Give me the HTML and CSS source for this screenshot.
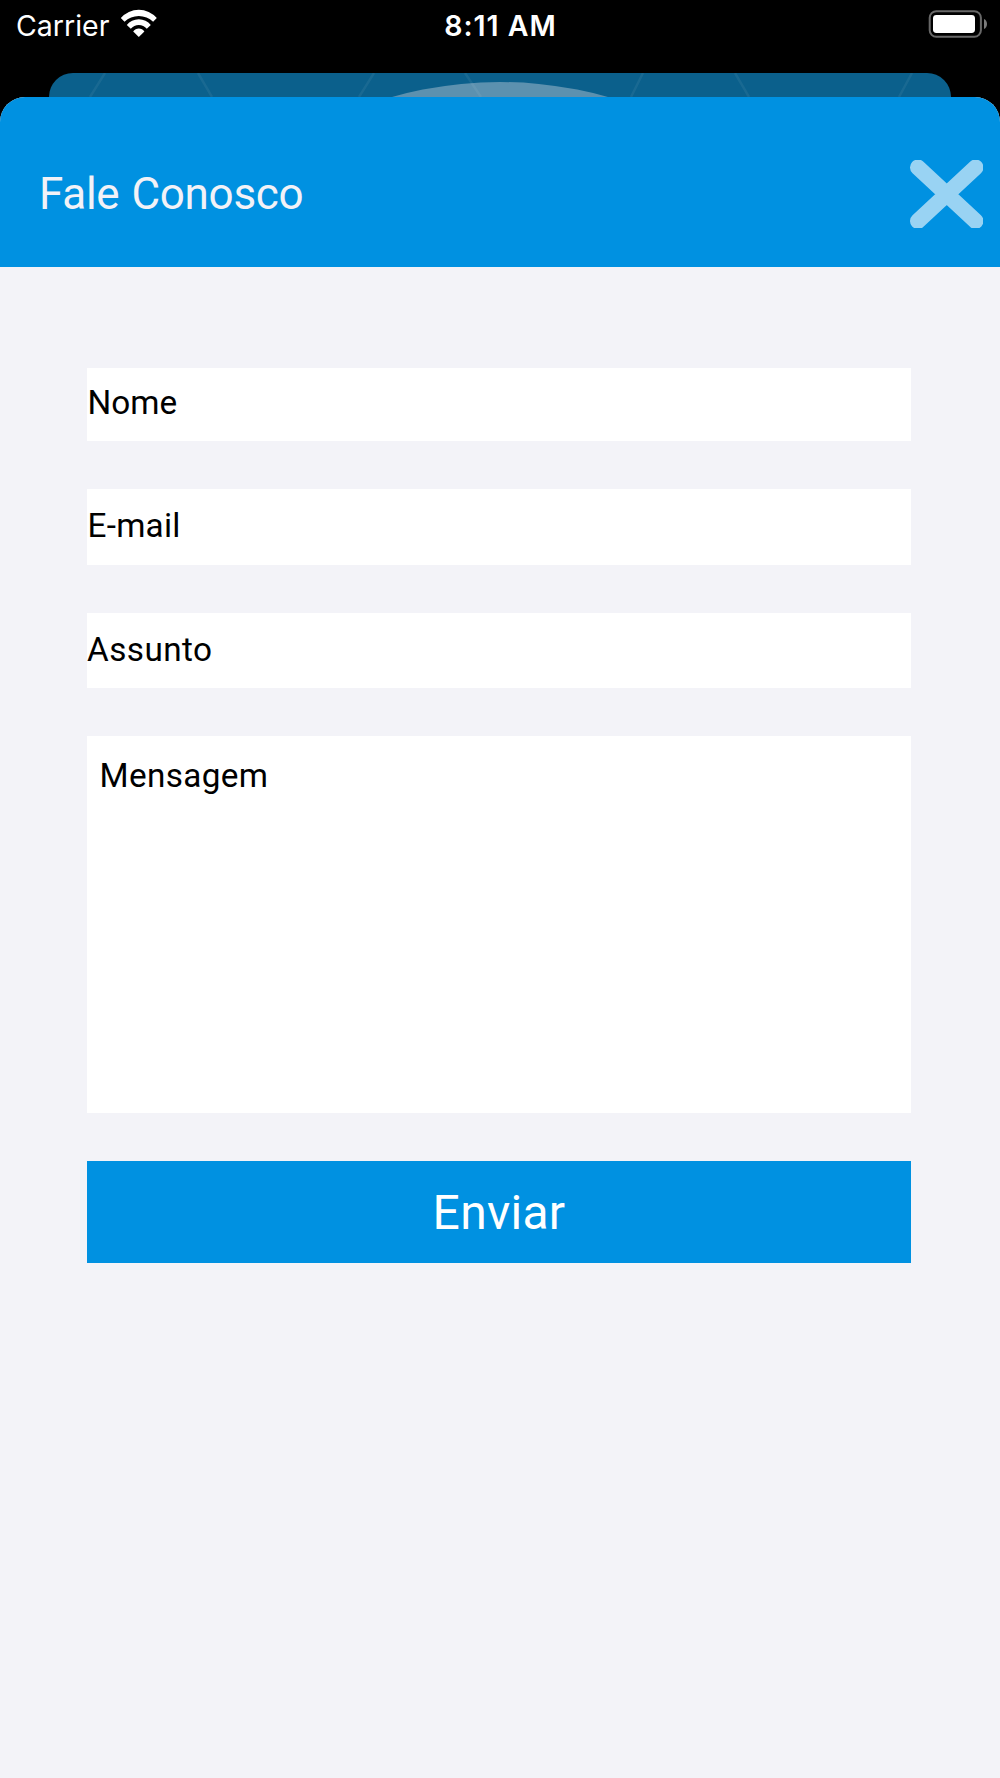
FILE: index.html
```html
<!DOCTYPE html>
<html lang="pt-BR">
<head>
<meta charset="utf-8">
<title>Fale Conosco</title>
<link rel="stylesheet" href="styles.css">
</head>
<body>
<div class="status-bar">
  <div class="status-left">
    <span class="carrier">Carrier</span>
    <svg class="wifi" width="38" height="28" viewBox="0 0 38 28">
      <path d="M0.8 9.1 A23.8 23.8 0 0 1 36.8 9.1 L33.1 12.8 A20.5 20.5 0 0 0 4.5 12.8 Z"/>
      <path d="M6.8 16 A15.2 15.2 0 0 1 30.8 16 L26.8 19.8 A10.5 10.5 0 0 0 10.8 19.8 Z"/>
      <path d="M13.2 22.4 A6.7 6.7 0 0 1 24.4 22.4 L18.8 28 Z"/>
    </svg>
  </div>
  <span class="time">8:11 AM</span>
  <svg class="battery" width="59" height="28" viewBox="0 0 59 28">
    <rect class="battery-shell" x="1.7" y="1.2" width="51.2" height="25.6" rx="6.6"/>
    <rect class="battery-level" x="5" y="5" width="42" height="18" rx="3.4"/>
    <path class="battery-cap" d="M56 9 C60 10.5 60 17.5 56 19 Z"/>
  </svg>
</div>

<svg class="back-sheet" width="902" height="24" viewBox="49 73 902 24">
  <circle class="back-disc" cx="500" cy="478" r="396"/>
  <path class="back-lines" d="M105 73L90 97M198 73L212 97M374 73L359 97M465 73L481 97M643 73L631 97M735 73L749 97M912 73L899 97"/>
</svg>

<main class="sheet">
  <header class="sheet-header">
    <h1 class="title">Fale Conosco</h1>
    <svg class="close" width="73" height="68" viewBox="0 0 73 68">
      <path d="M8 7.5L65.5 61M65.5 7.5L8 61"/>
    </svg>
  </header>
  <form class="form">
    <div class="field field-name">Nome</div>
    <div class="field field-email">E-mail</div>
    <div class="field field-subject">Assunto</div>
    <div class="field field-message">Mensagem</div>
    <button class="submit" type="button">Enviar</button>
  </form>
</main>
</body>
</html>
```

FILE: styles.css
```css
* {
  box-sizing: border-box;
}

body {
  margin: 0;
  width: 1000px;
  height: 1778px;
  overflow: hidden;
  display: flex;
  flex-direction: column;
  background: #000;
  font-family: Roboto, "Liberation Sans", sans-serif;
}

.status-bar {
  display: grid;
  grid-template-columns: 1fr auto 1fr;
  align-items: start;
  height: 73px;
  padding: 0 13px 0 16px;
  color: #fff;
  font: 400 28.5px/51px Inter, "Liberation Sans", sans-serif;
}

.status-left {
  display: flex;
  gap: 10px;
}

.carrier {
  width: 94px;
  white-space: nowrap;
}

.wifi {
  margin-top: 9px;
  fill: #fff;
}

.time {
  margin-left: -2px;
  font-weight: 600;
  letter-spacing: 1px;
}

.battery {
  justify-self: end;
  margin-top: 10px;
}

.battery-shell {
  fill: none;
  stroke: #686868;
  stroke-width: 2;
}

.battery-level {
  fill: #fff;
}

.battery-cap {
  fill: #7b7b7b;
}

.back-sheet {
  flex: none;
  align-self: center;
  border-radius: 24px 24px 0 0;
  background: #0b608c;
}

.back-disc {
  fill: #5c91af;
}

.back-lines {
  stroke: #fff;
  stroke-opacity: 0.06;
  stroke-width: 2.5;
}

.sheet {
  flex: 1;
  border-radius: 25px 25px 0 0;
  background: #f3f3f8;
  overflow: hidden;
}

.sheet-header {
  display: flex;
  align-items: center;
  justify-content: space-between;
  height: 170px;
  padding: 24px 17px 0 39px;
  background: #0091e1;
}

.title {
  margin: 0;
  color: #f2f2f7;
  font-size: 44px;
  font-weight: 400;
  line-height: 52px;
  letter-spacing: -0.3px;
  word-spacing: 1.5px;
}

.close {
  overflow: hidden;
}

.close path {
  stroke: #99d3f3;
  stroke-width: 16;
  stroke-linecap: round;
}

.form {
  display: flex;
  flex-direction: column;
  gap: 48px;
  padding: 101px 89px 0 87px;
}

.field {
  display: flex;
  align-items: center;
  background: #fff;
  color: #000;
  font-size: 33.3px;
  line-height: 40px;
  letter-spacing: 0.35px;
}

.field-name {
  height: 73px;
  padding: 0 0 4px 0.5px;
  letter-spacing: 0;
}

.field-email {
  height: 76px;
  padding: 0 0 3px 0.5px;
  letter-spacing: 0.25px;
}

.field-subject {
  height: 75px;
  padding-bottom: 2px;
  letter-spacing: 0.45px;
}

.field-message {
  align-items: flex-start;
  height: 377px;
  padding: 20px 0 0 12.5px;
}

.submit {
  height: 102px;
  padding: 2px 0 0;
  border: 0;
  background: #0091e1;
  color: #fff;
  font: 400 48px/56px Roboto, "Liberation Sans", sans-serif;
  letter-spacing: 0.3px;
}
```
